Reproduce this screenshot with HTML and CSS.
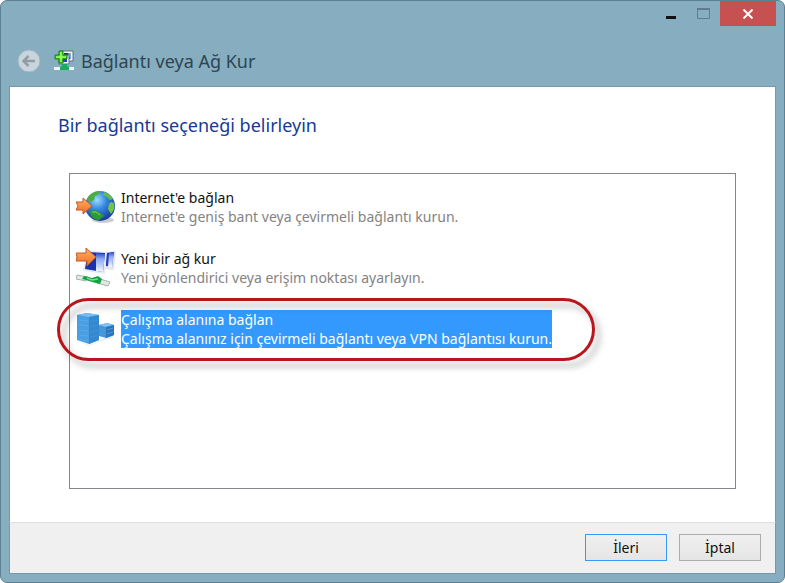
FILE: index.html
```html
<!DOCTYPE html>
<html lang="tr">

<head>
	<meta charset="utf-8">
	<title>Bağlantı veya Ağ Kur</title>
	<link rel="stylesheet" href="styles.css">
</head>

<body>
	<div class="window">
		<div class="window-controls">
			<button class="control" aria-label="Simge durumuna küçült">
				<svg width="12" height="12" viewBox="0 0 12 12"><path d="M1 8h10v3H1z" fill="#111"/></svg>
			</button>
			<button class="control" aria-label="Ekranı kapla" disabled>
				<svg width="13" height="11" viewBox="0 0 13 11"><path d="M.5 1.5h12v9H.5z" fill="none" stroke="#5f7d8d"/><path d="M0 0h13v2H0z" fill="#5f7d8d"/></svg>
			</button>
			<button class="control close" aria-label="Kapat">
				<svg width="12" height="10" viewBox="0 0 12 10"><path d="M1.500 .5l9 9M10.500 .5l-9 9" stroke="#fff" stroke-width="2"/></svg>
			</button>
		</div>
		<header class="title-bar">
			<button class="back" aria-label="Geri" disabled>
				<svg width="24" height="24" viewBox="0 0 24 24">
					<circle cx="12" cy="12" r="11" fill="#c9d5dc" stroke="#a3b4bd"/>
					<path d="M18 12H7M11.5 7l-5 5 5 5" fill="none" stroke="#929da4" stroke-width="2.5"/>
				</svg>
			</button>
			<svg class="title-icon" width="20" height="22" viewBox="0 0 20 22">
				<path d="M8 1h11v10H8z" fill="#f0f5fa" stroke="#5f7385"/>
				<path d="M10 3h7v6h-7z" fill="#1b23a8"/>
				<path d="M14 3h3v6h-1z" fill="#7da5e8"/>
				<path d="M5 5h10v9H5z" fill="#f0f5fa" stroke="#5f7385"/>
				<path d="M7 7h6v5H7z" fill="#2f3cbb"/>
				<path d="M0 17h20v3H0z" fill="#edf2f3"/>
				<path d="M8 14h5v2l2 1v3H6v-3l2-1z" fill="#1baa63"/>
				<path d="M5 1h4v4h4v4H9v4H5V9H1V5h4z" fill="#45d61c" stroke="#11801a"/>
				<path d="M7 2v10M2 7h10" stroke="#a2fa62" stroke-width="1.5"/>
			</svg>
			<span class="title">Bağlantı veya Ağ Kur</span>
		</header>
		<main class="page">
			<h1 class="heading">Bir bağlantı seçeneği belirleyin</h1>
			<div class="options">
				<button class="option">
					<svg class="option-icon" width="42" height="40" viewBox="0 0 42 40">
						<defs>
							<radialGradient id="globe" cx=".4" cy=".3" r=".7">
								<stop offset="0" stop-color="#9bdcff"/>
								<stop offset=".45" stop-color="#3487df"/>
								<stop offset="1" stop-color="#173c9c"/>
							</radialGradient>
							<linearGradient id="orange" x2="0" y2="1">
								<stop offset="0" stop-color="#ffb36a"/>
								<stop offset="1" stop-color="#f36a1d"/>
							</linearGradient>
						</defs>
						<ellipse cx="27" cy="33" rx="11" ry="3" fill="#c9ccd0"/>
						<circle cx="24" cy="19" r="15" fill="url(#globe)"/>
						<path d="M12 10c3-4 8-6 12-6l-1 3-4 2-1 4-4 2-3-2z" fill="#4cae41"/>
						<path d="M28 5c4 1 7 4 9 7l-3 1-3-3-4-2z" fill="#65bd46"/>
						<path d="M35 15l3 1c1 4 0 8-3 11l-3-5 1-5z" fill="#74c34b"/>
						<path d="M14 24l5-1 6 3 3 3-5 4c-5 0-9-4-9-9z" fill="#2d9b35"/>
						<path d="M16 25h4l4 3" fill="none" stroke="#89d65c"/>
						<path d="M0 15h7v-4l9 8-9 8v-4H0l2-4z" fill="url(#orange)" stroke="#bc5a2b"/>
					</svg>
					<span class="option-text">
						<span class="option-name">Internet'e bağlan</span>
						<span class="option-note">Internet'e geniş bant veya çevirmeli bağlantı kurun.</span>
					</span>
				</button>
				<button class="option">
					<svg class="option-icon" width="42" height="40" viewBox="0 0 42 40">
						<defs>
							<linearGradient id="screen" x2="0" y2="1">
								<stop offset="0" stop-color="#2a49c8"/>
								<stop offset=".3" stop-color="#88a8ef"/>
								<stop offset="1" stop-color="#f4f8ff"/>
							</linearGradient>
						</defs>
						<path d="M28 4l12-1-2 19-10-1z" fill="#e2e5ed"/>
						<path d="M30 5l8-1-2 15-6-1z" fill="#233eb7"/>
						<path d="M33 5l5-1-2 15h-4z" fill="url(#screen)"/>
						<path d="M11 2l20 2-2 22-22-3z" fill="#e8ebf2"/>
						<path d="M12 4l17 1-2 19-18-3z" fill="#1a31ad"/>
						<path d="M20 5l9 1-2 18-7-1z" fill="url(#screen)"/>
						<path d="M1 27l11 2-2 4-10-2z" fill="#e2e9e5" stroke="#a4b3ac"/>
						<path d="M24 31l10 3-2 4-11-3z" fill="#e2e9e5" stroke="#a4b3ac"/>
						<path d="M8 28l5 1 3 1 6-2 4 3-2 5-8-2-6-2-4-1z" fill="#12a444"/>
						<path d="M11 30l5 2 6-1" fill="none" stroke="#76df88" stroke-width="1.5"/>
						<path d="M0 5h10V0l10 9-9 9v-5H0l1-4z" fill="url(#orange)" stroke="#bc5a2b"/>
					</svg>
					<span class="option-text">
						<span class="option-name">Yeni bir ağ kur</span>
						<span class="option-note">Yeni yönlendirici veya erişim noktası ayarlayın.</span>
					</span>
				</button>
				<button class="option selected">
					<svg class="option-icon" width="42" height="40" viewBox="0 0 42 40">
						<path d="M1 32l12 4 10-4 7-4 9-4-3 5-11 3-12 5z" fill="#e4ecf2"/>
						<path d="M1 6l10-2 12 2v25l-10 4-12-4z" fill="#4a9fe3"/>
						<path d="M1 6l10-2 12 2-10 2z" fill="#79bdf0"/>
						<path d="M13 8l10-2v25l-10 4z" fill="#3388d0"/>
						<path d="M3 11l9 1M3 16l9 1M3 21l9 1M3 26l9 1M3 30l9 2" stroke="#5aaaea"/>
						<path d="M14 13l8-2M14 18l8-2M14 23l8-2M14 28l8-2" stroke="#3f92d8"/>
						<path d="M23 16l8-2 7 2v10l-8 3-7-2z" fill="#4596d8"/>
						<path d="M23 16l8-2 7 2-8 2z" fill="#82c2ef"/>
						<path d="M30 18l8-2v10l-8 3z" fill="#2a76bc"/>
						<path d="M24 20l5 1M24 24l5 1M31 21l6-2M31 25l6-2" stroke="#4d9bda"/>
					</svg>
					<span class="option-text">
						<span class="option-name">Çalışma alanına bağlan</span>
						<span class="option-note">Çalışma alanınız için çevirmeli bağlantı veya VPN bağlantısı kurun.</span>
					</span>
				</button>
			</div>
		</main>
		<footer class="footer">
			<button class="button primary">İleri</button>
			<button class="button">İptal</button>
		</footer>
	</div>
</body>

</html>
```
FILE: styles.css
```css
*,
*::after {
	margin: 0;
	padding: 0;
	box-sizing: border-box;
}

body {
	background: white;
	font-family: "Noto Sans", "Open Sans", sans-serif;
	font-size: 14px;
	color: #111;
}

button {
	font: inherit;
	color: inherit;
	border: none;
	background: none;
}

svg {
	display: block;
	flex: none;
}

.window {
	display: flex;
	flex-direction: column;
	min-height: 100vh;
	padding: 0 8px 8px;
	background: #86adc0;
	border: 1px solid #5d8192;
	border-radius: 7px;
}

.window-controls {
	display: flex;
	justify-content: flex-end;
}

.control {
	display: flex;
	align-items: center;
	justify-content: center;
	width: 33px;
	height: 25px;
}
.control.close {
	width: 56px;
	background: #c75050;
}

.title-bar {
	display: flex;
	align-items: center;
	height: 60px;
	padding: 10px 8px 0;
}

.title-icon {
	margin: 0 7px 0 13px;
}

.title {
	font-size: 18px;
	color: #2f4551;
}

.page {
	flex: 1;
	display: flex;
	flex-direction: column;
	padding: 24px 39px 33px 48px;
	background: white;
	border: 1px solid #7399aa;
	border-bottom: none;
}

.heading {
	font-size: 18px;
	font-weight: normal;
	line-height: 28px;
	color: #163a96;
}

.options {
	flex: 1;
	display: flex;
	flex-direction: column;
	gap: 21px;
	margin: 34px 0 0 11px;
	padding: 13px 6px;
	border: 1px solid #83868e;
}

.option {
	display: flex;
	align-items: center;
	gap: 3px;
	text-align: left;
	line-height: 19px;
}

.option-text {
	display: flex;
	flex-direction: column;
	white-space: nowrap;
}

.option-note {
	color: #838383;
}

/* red callout ring round the selected option */
.selected {
	position: relative;
}
.selected::after {
	content: "";
	position: absolute;
	top: -11px;
	left: -19px;
	width: 538px;
	height: 63px;
	border: 3px solid #b9151b;
	border-radius: 32px;
	filter: drop-shadow(5px 6px 3px rgba(0, 0, 0, 0.3));
}
.selected .option-text {
	background: #3399ff;
	color: white;
}
.selected .option-note {
	color: white;
}

.footer {
	display: flex;
	justify-content: flex-end;
	gap: 12px;
	padding: 11px 14px 12px;
	background: #f0f0f0;
	border: 1px solid #7399aa;
	border-top-color: #dfdfdf;
}

.button {
	width: 82px;
	height: 27px;
	background: linear-gradient(#f0f0f0, #e5e5e5);
	border: 1px solid #acacac;
}
.button.primary {
	border: 1px solid #3399ff;
}
```
